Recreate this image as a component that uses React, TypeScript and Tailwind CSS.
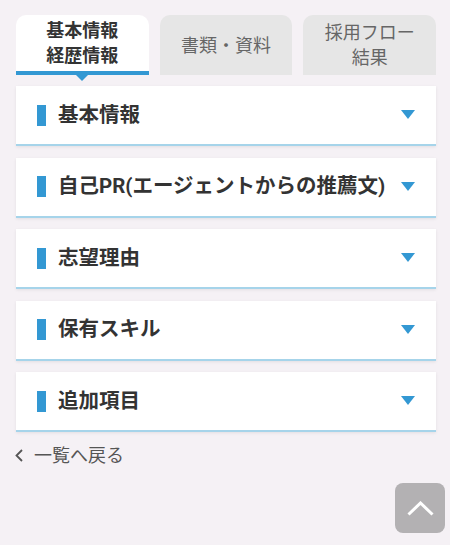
import React from "react";

const FONT = { fontFamily: 'Roboto, "Noto Sans CJK JP", "Noto Sans", sans-serif' };

const sections = [
  "基本情報",
  "自己PR(エージェントからの推薦文)",
  "志望理由",
  "保有スキル",
  "追加項目",
];

export default function App() {
  return (
    <div
      className="relative w-[450px] h-[545px] bg-[#f5f1f5] pt-[15px] pl-4 pr-[14px] overflow-hidden"
      style={FONT}
    >
      {/* Tabs */}
      <div className="grid grid-cols-3 gap-[11px] h-[60px]">
        <div className="relative flex flex-col items-center justify-center bg-white rounded-t-[10px] border-b-4 border-[#3398d3] text-[18px] leading-[25px] font-bold text-[#333]">
          <span>基本情報</span>
          <span>経歴情報</span>
          <div className="absolute left-1/2 -translate-x-1/2 top-full w-0 h-0 border-l-[10px] border-r-[10px] border-t-[10px] border-l-transparent border-r-transparent border-t-[#3398d3]" />
        </div>
        <div className="flex items-center justify-center bg-[#e6e6e6] rounded-t-[10px] text-[18px] text-[#666]">
          書類・資料
        </div>
        <div className="flex flex-col items-center justify-center bg-[#e6e6e6] rounded-t-[10px] text-[18px] leading-[25px] text-[#666]">
          <span>採用フロー</span>
          <span>結果</span>
        </div>
      </div>

      {/* Cards */}
      <div className="mt-[11px] flex flex-col gap-[11.5px]">
        {sections.map((s) => (
          <div
            key={s}
            className="h-[60px] bg-white border-b-2 border-[#a6d4ea] shadow-[0_1px_3px_rgba(0,0,0,0.08)] flex items-center pl-[21px] pr-[21px]"
          >
            <div className="w-[9px] h-[21px] bg-[#3398d3] shrink-0" />
            <div className="ml-[12px] flex-1 text-[20.5px] font-bold text-[#333] whitespace-nowrap leading-none">
              {s}
            </div>
            <svg width="14" height="10" viewBox="0 0 14 10" className="shrink-0">
              <polygon points="0,0 14,0 7,9" fill="#3398d3" />
            </svg>
          </div>
        ))}
      </div>

      {/* Back link */}
      <div className="mt-[11px] flex items-center text-[18px] text-[#555] h-[24px]">
        <svg width="8" height="13" viewBox="0 0 8 13" className="ml-[-1px] mr-[11px]">
          <polyline points="7,1 1.5,6.5 7,12" fill="none" stroke="#555" strokeWidth="1.8" />
        </svg>
        <span>一覧へ戻る</span>
      </div>

      {/* Scroll to top */}
      <div className="absolute left-[395px] top-[483px] w-[50px] h-[50px] rounded-[8px] bg-[#b3b1b3] flex items-center justify-center">
        <svg width="27" height="15" viewBox="0 0 27 15">
          <polyline points="1.5,13.5 13.5,2 25.5,13.5" fill="none" stroke="#fff" strokeWidth="3" />
        </svg>
      </div>
    </div>
  );
}
